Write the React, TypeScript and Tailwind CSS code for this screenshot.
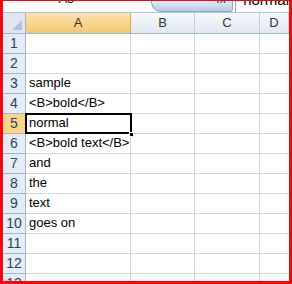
const cols = [
  { name: "A", w: "w-[105px]" },
  { name: "B", w: "w-[64px]" },
  { name: "C", w: "w-[65px]" },
  { name: "D", w: "flex-1" },
];

const rows = [
  "",
  "",
  "sample",
  "<B>bold</B>",
  "normal",
  "<B>bold text</B>",
  "and",
  "the",
  "text",
  "goes on",
  "",
  "",
  "",
];

export default function App() {
  return (
    <div
      className="w-[292px] h-[284px] overflow-hidden bg-white border-[#ef0b0b] border-l-[3px] border-r-[3px] border-b-[3px] border-t-[1px] flex flex-col text-[13px] text-black"
      style={{ fontFamily: '"Liberation Sans", Arial, sans-serif' }}
    >
      {/* formula bar, mostly cut off */}
      <div className="h-[12px] shrink-0 flex border-b border-[#b4c2d6] overflow-hidden">
        <div className="w-[134px] flex justify-center">
          <span className="-mt-[9px] leading-none text-[#222]">A5</span>
        </div>
        <div className="w-[23px]" />
        <div className="w-[86px] h-[11px] rounded-bl-[10px] rounded-br-[3px] bg-gradient-to-b from-[#dfe8f4] to-[#b9cde6] border border-t-0 border-[#8aa6c9] flex justify-end pr-[6px]">
          <span className="-mt-[8px] leading-none italic text-[12px] text-[#333]">fx</span>
        </div>
        <div className="w-px bg-[#9aaabd] ml-[2px]" />
        <div className="flex-1 pl-[7px]">
          <span className="block -mt-[9px] leading-none text-[15px]">normal</span>
        </div>
      </div>

      {/* column headers */}
      <div className="h-[21px] shrink-0 flex border-b border-[#9eb6ce]">
        <div className="w-[23px] relative bg-[#dfe6f1] border-r border-[#9eb6ce]">
          <div className="absolute right-[3px] bottom-[3px] w-0 h-0 border-l-[10px] border-l-transparent border-b-[10px] border-b-[#b3c1d4]" />
        </div>
        {cols.map((c) => (
          <div
            key={c.name}
            className={`${c.w} flex items-center justify-center border-r ${
              c.name === "A"
                ? "bg-gradient-to-b from-[#fbe2ae] to-[#f4c872] border-[#d6a85a] text-[#333]"
                : "bg-gradient-to-b from-[#f7f9fc] to-[#e1e8f2] border-[#c3cfdf] text-[#333]"
            }`}
          >
            {c.name}
          </div>
        ))}
      </div>

      {/* rows */}
      {rows.map((txt, i) => {
        const n = i + 1;
        const sel = n === 5;
        return (
          <div key={n} className="h-[20px] shrink-0 flex">
            <div
              className={`w-[23px] flex items-center justify-center border-r border-b text-[14px] ${
                sel
                  ? "bg-[#f8d48e] border-[#d9ae63] text-[#27415f]"
                  : "bg-[#e4ecf7] border-[#9eb6ce] text-[#27415f]"
              }`}
            >
              {n}
            </div>
            <div className="w-[105px] relative border-r border-b border-[#d0d7e5] flex items-end pl-[3px] pb-[1px] whitespace-nowrap overflow-visible">
              <span className="relative z-10">{txt}</span>
              {sel && (
                <>
                  <div className="absolute -left-px -top-px right-[-2px] bottom-[-1px] border-2 border-black" />
                  <div className="absolute right-[-4px] bottom-[-4px] w-[5px] h-[5px] bg-black border border-white z-20" />
                </>
              )}
            </div>
            <div className="w-[64px] border-r border-b border-[#d0d7e5]" />
            <div className="w-[65px] border-r border-b border-[#d0d7e5]" />
            <div className="flex-1 border-b border-[#d0d7e5]" />
          </div>
        );
      })}
    </div>
  );
}
